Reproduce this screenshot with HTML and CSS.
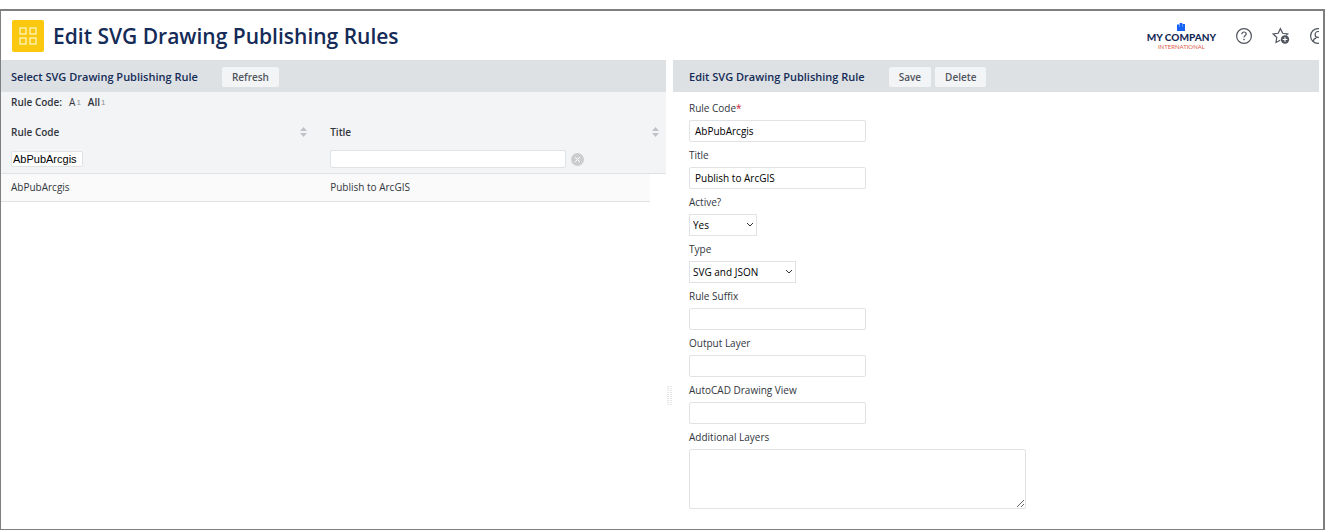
FILE: index.html
```html
<!DOCTYPE html>
<html lang="en">
<head>
  <meta charset="UTF-8">
  <title>Edit SVG Drawing Publishing Rules</title>
  <meta name="viewport" content="width=device-width, initial-scale=1">
  <link rel="stylesheet" href="styles.css">
</head>
<body>
  <div class="frame">
    <header class="page-header">
      <svg class="app-icon" viewBox="0 0 32 32" aria-hidden="true">
        <rect width="32" height="32" rx="2" fill="#fac90f"/>
        <g fill="none" stroke="#fff3c0" stroke-width="1.3">
          <rect x="8" y="8" width="6" height="6"/>
          <rect x="18" y="8" width="6" height="6"/>
          <rect x="8" y="18" width="6" height="6"/>
          <rect x="18" y="18" width="6" height="6"/>
        </g>
      </svg>
      <h1>Edit SVG Drawing Publishing Rules</h1>
      <div class="header-tools">
        <div class="company">
          <svg class="company-mark" viewBox="0 0 8 8" aria-hidden="true">
            <path d="M0 1.5h2.4V8H0zM2.7 0h2.6v8H2.7zM5.6 1H8v7H5.6z" fill="#1463f5"/>
            <path d="M0 4h8v4H0z" fill="#1463f5"/>
          </svg>
          <span class="company-name">MY COMPANY</span>
          <span class="company-sub">INTERNATIONAL</span>
        </div>
        <button class="icon-btn" type="button" aria-label="Help">
          <svg viewBox="0 0 18 18">
            <circle cx="9" cy="9" r="7.4"/>
            <path d="M6.8 7.2c0-1.4 1-2.2 2.2-2.2s2.2.8 2.2 2c0 1.5-2.2 1.6-2.2 3.4"/>
            <circle class="solid" cx="9" cy="12.6" r=".8"/>
          </svg>
        </button>
        <button class="icon-btn" type="button" aria-label="Add to favorites">
          <svg viewBox="0 0 18 18">
            <path d="M8.2 13.2 4 15.5l.8-5L1.2 7l5-.7L8.4 1.7l2.3 4.6 5 .7-1.5 1.4"/>
            <circle class="solid" cx="13" cy="12.5" r="4.2"/>
            <path class="plus" d="M13 10.2v4.6M10.7 12.5h4.6"/>
          </svg>
        </button>
        <button class="icon-btn" type="button" aria-label="Account">
          <svg viewBox="0 0 18 18">
            <circle cx="9" cy="9" r="7.4"/>
            <circle cx="9" cy="7.4" r="2.9"/>
            <path d="M4.2 14.4c.4-2.4 2-3.4 3.2-3.6M13.8 14.4c-.4-2.4-2-3.4-3.2-3.6"/>
          </svg>
        </button>
      </div>
    </header>

    <main class="layout">
      <section class="panel">
        <div class="panel-bar">
          <h2>Select SVG Drawing Publishing Rule</h2>
          <button class="btn" type="button">Refresh</button>
        </div>
        <div class="index-bar">
          <b>Rule Code:</b>
          <a href="#">A<small>1</small></a>
          <a href="#" class="current">All<small>1</small></a>
        </div>
        <table class="grid">
          <colgroup>
            <col class="col-code">
            <col>
            <col class="col-scroll">
          </colgroup>
          <thead>
            <tr class="titles">
              <th>
                <div class="sort-head">Rule Code
                  <svg class="sort" viewBox="0 0 7 10"><path d="M0 4 3.5 0 7 4zM0 6h7L3.5 10z"/></svg>
                </div>
              </th>
              <th colspan="2">
                <div class="sort-head">Title
                  <svg class="sort" viewBox="0 0 7 10"><path d="M0 4 3.5 0 7 4zM0 6h7L3.5 10z"/></svg>
                </div>
              </th>
            </tr>
            <tr class="filters">
              <td><input class="filter-code" type="text" value="AbPubArcgis" aria-label="Filter by rule code"></td>
              <td colspan="2">
                <div class="filter-title">
                  <input type="text" aria-label="Filter by title">
                  <button class="clear" type="button" aria-label="Clear filter">
                    <svg viewBox="0 0 13 13"><circle cx="6.5" cy="6.5" r="6.5"/><path d="m4 4 5 5M9 4 4 9"/></svg>
                  </button>
                </div>
              </td>
            </tr>
          </thead>
          <tbody>
            <tr>
              <td>AbPubArcgis</td>
              <td>Publish to ArcGIS</td>
            </tr>
          </tbody>
        </table>
      </section>

      <div class="splitter">
        <svg class="grip" viewBox="0 0 5 19"><path d="M1 0v19M4 0v19"/></svg>
      </div>

      <section class="panel">
        <div class="panel-bar edit-bar">
          <h2>Edit SVG Drawing Publishing Rule</h2>
          <div class="actions">
            <button class="btn" type="submit" form="ruleForm">Save</button>
            <button class="btn" type="button">Delete</button>
          </div>
        </div>
        <form class="rule-form" id="ruleForm">
          <div class="field">
            <label for="ruleCode">Rule Code<span class="required">*</span></label>
            <input id="ruleCode" type="text" value="AbPubArcgis">
          </div>
          <div class="field">
            <label for="title">Title</label>
            <input id="title" type="text" value="Publish to ArcGIS">
          </div>
          <div class="field">
            <label for="active">Active?</label>
            <div class="select select-short">
              <select id="active">
                <option>Yes</option>
                <option>No</option>
              </select>
              <svg viewBox="0 0 8 5"><path d="m1 1 3 3 3-3"/></svg>
            </div>
          </div>
          <div class="field">
            <label for="type">Type</label>
            <div class="select">
              <select id="type">
                <option>SVG and JSON</option>
              </select>
              <svg viewBox="0 0 8 5"><path d="m1 1 3 3 3-3"/></svg>
            </div>
          </div>
          <div class="field">
            <label for="suffix">Rule Suffix</label>
            <input id="suffix" type="text">
          </div>
          <div class="field">
            <label for="outputLayer">Output Layer</label>
            <input id="outputLayer" type="text">
          </div>
          <div class="field">
            <label for="view">AutoCAD Drawing View</label>
            <input id="view" type="text">
          </div>
          <div class="field">
            <label for="layers">Additional Layers</label>
            <textarea id="layers"></textarea>
          </div>
        </form>
      </section>
    </main>
  </div>
</body>
</html>
```

FILE: styles.css
```css
:root {
  --navy: #152b57;
  --text: #32363c;
  --bar: #dde1e4;
  --light: #f3f4f6;
  --line: #dfe3e5;
  --frame: #7f7f7f;
}
* {
  box-sizing: border-box;
}
body {
  margin: 0;
  background: #fff;
  color: var(--text);
  font-family: "Open Sans", sans-serif;
  font-size: 10px;
  line-height: 16px;
}
input, select, textarea, button {
  font: inherit;
  margin: 0;
}
h1, h2 {
  margin: 0;
  color: var(--navy);
  font-weight: 600;
}
.frame {
  display: flex;
  flex-direction: column;
  margin: 9px 9px 0 0;
  min-height: calc(100vh - 9px);
  border: 1px solid var(--frame);
  border-top-width: 2px;
  border-right-width: 2px;
  padding-right: 4px;
}

/* header */
.page-header {
  display: flex;
  align-items: center;
  height: 49px;
  padding-left: 11px;
  overflow: hidden;
}
.app-icon {
  width: 32px;
  height: 32px;
  margin-right: 9px;
}
h1 {
  font-size: 21px;
  line-height: 30px;
  white-space: nowrap;
}
.header-tools {
  display: flex;
  align-items: center;
  gap: 19px;
  margin-left: auto;
  margin-right: -8px;
}
.company {
  display: flex;
  flex-direction: column;
  align-items: center;
  padding-top: 2px;
  font-family: Lato, sans-serif;
}
.company-mark {
  width: 8px;
  height: 8px;
}
.company-name {
  color: var(--navy);
  font-size: 10px;
  font-weight: 900;
  line-height: 12px;
}
.company-sub {
  color: #e0604f;
  font-size: 6px;
  line-height: 7px;
}
.icon-btn {
  flex: none;
  width: 18px;
  height: 18px;
  padding: 0;
  border: 0;
  background: none;
}
.icon-btn svg {
  display: block;
  fill: none;
  stroke: #50555e;
  stroke-width: 1.2;
}
.icon-btn .solid {
  fill: #50555e;
  stroke: none;
}
.icon-btn .plus {
  stroke: #fff;
}

/* panels */
.layout {
  display: grid;
  grid-template-columns: 665fr 7px 646fr;
  flex: 1;
}
.panel-bar {
  display: flex;
  align-items: center;
  gap: 24px;
  height: 32px;
  padding: 2px 10px 0;
  background: var(--bar);
}
.edit-bar {
  padding-left: 16px;
}
h2 {
  font-size: 11px;
  line-height: 16px;
}
.actions {
  display: flex;
  gap: 4px;
}
.btn {
  height: 20px;
  padding: 0 10px;
  border: 0;
  border-radius: 2px;
  background: var(--light);
  color: #50555e;
  font-weight: 600;
}
.index-bar {
  display: flex;
  gap: 7px;
  height: 22px;
  padding: 2px 10px;
  background: var(--light);
}
.index-bar b, .index-bar .current {
  font-weight: 600;
}
.index-bar a {
  color: inherit;
  text-decoration: none;
}
.index-bar small {
  margin-left: 1px;
  color: #8b9097;
  font-family: "Liberation Sans", Arial, sans-serif;
  font-size: 8px;
  font-weight: 400;
  vertical-align: 1px;
}

/* rules table */
.grid {
  width: 100%;
  table-layout: fixed;
  border-collapse: collapse;
}
.col-code {
  width: 48%;
}
.col-scroll {
  width: 16px;
}
.grid th, .grid td {
  padding: 0 10px;
  text-align: left;
}
.grid thead {
  background: var(--light);
}
.titles th {
  height: 36px;
  font-weight: 600;
}
.titles th:last-child {
  padding-right: 4px;
}
.sort-head {
  display: flex;
  align-items: center;
  justify-content: space-between;
  padding-right: 3px;
}
.sort {
  width: 7px;
  height: 10px;
  fill: #bfc2c7;
}
.filters td {
  height: 23px;
  border-bottom: 1px solid var(--line);
  vertical-align: top;
}
.grid input {
  display: block;
  border: 1px solid var(--line);
  border-radius: 2px;
  background: #fff;
}
.grid .filter-code {
  width: 72px;
  height: 16px;
  margin-top: 1px;
  padding: 0 1px;
  color: #000;
  font-family: "Liberation Sans", Arial, sans-serif;
  font-size: 11px;
}
.filter-title {
  display: flex;
  align-items: center;
  gap: 5px;
}
.filter-title input {
  width: 236px;
  height: 18px;
}
.clear {
  width: 13px;
  height: 13px;
  padding: 0;
  border: 0;
  background: none;
}
.clear svg {
  display: block;
  fill: #cbcdcf;
  stroke: #fff;
}
.clear circle {
  stroke: none;
}
.grid tbody td {
  height: 28px;
  border-bottom: 1px solid var(--line);
  background: #fafafa;
}

.splitter {
  display: flex;
  align-items: center;
  justify-content: center;
}
.grip {
  width: 5px;
  height: 19px;
  margin-top: 202px;
  fill: none;
  stroke: #c8ccd1;
  stroke-dasharray: 1 1;
}

/* edit form */
.rule-form {
  padding: 8px 16px 18px;
}
.field {
  margin-bottom: 5px;
}
.field:last-child {
  margin-bottom: 0;
}
.field label {
  display: block;
  margin-bottom: 4px;
  line-height: 16px;
}
.required {
  color: #d0202e;
}
.field input, .field select, .field textarea {
  display: block;
  border: 1px solid var(--line);
  border-radius: 2px;
  background: #fff;
  color: #000;
}
.field input {
  width: 177px;
  height: 22px;
  padding: 0 5px;
}
.field textarea {
  width: 337px;
  max-width: 100%;
  height: 60px;
  padding: 4px 5px;
}
.select {
  position: relative;
  width: 107px;
}
.select-short {
  width: 68px;
}
.field select {
  width: 100%;
  height: 22px;
  padding: 0 3px;
  border-radius: 0;
  appearance: none;
}
.select svg {
  position: absolute;
  top: 8px;
  right: 3px;
  width: 8px;
  height: 5px;
  fill: none;
  stroke: #333;
  pointer-events: none;
}
```
